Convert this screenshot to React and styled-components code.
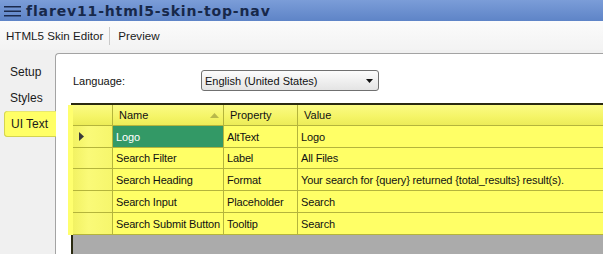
import styled, { createGlobalStyle } from 'styled-components'

const GlobalStyle = createGlobalStyle`
  html, body {
    margin: 0;
    padding: 0;
    background: #f0f0f0;
  }
  * {
    box-sizing: border-box;
  }
`

const rows = [
  { name: 'Logo', property: 'AltText', value: 'Logo', current: true },
  { name: 'Search Filter', property: 'Label', value: 'All Files' },
  { name: 'Search Heading', property: 'Format', value: 'Your search for {query} returned {total_results} result(s).' },
  { name: 'Search Input', property: 'Placeholder', value: 'Search' },
  { name: 'Search Submit Button', property: 'Tooltip', value: 'Search' },
]

const tabs = ['Setup', 'Styles', 'UI Text']

const App = () => {
  return (
    <Window>
      <GlobalStyle />

      {/* title bar */}
      <TitleBar>
        <svg width="17" height="12" viewBox="0 0 17 12">
          <rect x="0" y="1" width="17" height="1.5" fill="#1b2a4c" />
          <rect x="0" y="5.5" width="17" height="1.5" fill="#1b2a4c" />
          <rect x="0" y="10" width="17" height="1.5" fill="#1b2a4c" />
        </svg>
        <Title>flarev11-html5-skin-top-nav</Title>
      </TitleBar>

      {/* menu */}
      <MenuBar>
        <MenuItem>HTML5 Skin Editor</MenuItem>
        <MenuSep />
        <MenuItem>Preview</MenuItem>
      </MenuBar>

      <Body>
        <Sidebar>
          {tabs.map((t) => (
            <Tab key={t} $active={t === 'UI Text'}>{t}</Tab>
          ))}
        </Sidebar>

        <Panel>
          <LangRow>
            <LangLabel>Language:</LangLabel>
            <Select>
              <span>English (United States)</span>
              <svg width="7" height="4" viewBox="0 0 7 4">
                <polygon points="0,0 7,0 3.5,4" fill="#111" />
              </svg>
            </Select>
          </LangRow>

          <Grid>
            <RowsBlock>
              <HeaderRow>
                <RowHead $header />
                <HeadCell $w={111}>
                  Name
                  <svg width="9" height="5" viewBox="0 0 9 5">
                    <polygon points="0,5 9,5 4.5,0" fill="#b8b84a" />
                  </svg>
                </HeadCell>
                <HeadCell $w={74}>Property</HeadCell>
                <HeadCell>Value</HeadCell>
              </HeaderRow>
              {rows.map((r) => (
                <Row key={r.name}>
                  <RowHead>
                    {r.current ? (
                      <svg width="5" height="9" viewBox="0 0 5 9">
                        <polygon points="0,0 5,4.5 0,9" fill="#3a3a3a" />
                      </svg>
                    ) : null}
                  </RowHead>
                  <Cell $w={111} $selected={r.current}>{r.name}</Cell>
                  <Cell $w={74}>{r.property}</Cell>
                  <Cell>{r.value}</Cell>
                </Row>
              ))}
            </RowsBlock>
            <Empty />
          </Grid>
        </Panel>
      </Body>
    </Window>
  )
}

const Window = styled.div`
  width: 603px;
  height: 254px;
  display: flex;
  flex-direction: column;
  overflow: hidden;
  background: #f0f0f0;
  font-family: "Liberation Sans", Arial, sans-serif;
  color: #111;
`

const TitleBar = styled.div`
  height: 21px;
  display: flex;
  align-items: center;
  gap: 5px;
  padding-left: 4px;
  background: linear-gradient(#7b9dd8, #5e84c7);
  svg {
    flex: none;
  }
`

const Title = styled.span`
  font-family: "DejaVu Sans", sans-serif;
  font-weight: bold;
  font-size: 14px;
  letter-spacing: 0.85px;
  color: #17284a;
`

const MenuBar = styled.div`
  height: 29px;
  display: flex;
  align-items: center;
  padding-left: 6px;
  background: linear-gradient(#fbfbfb, #f3f3f3);
`

const MenuItem = styled.span`
  font-size: 11.6px;
  color: #1a1a1a;
`

const MenuSep = styled.div`
  width: 1px;
  height: 18px;
  background: #c9c9c9;
  margin: 0 8px 0 6px;
`

const Body = styled.div`
  flex: 1;
  display: flex;
  padding-top: 3px;
`

const Sidebar = styled.div`
  width: 55px;
  flex: none;
  display: flex;
  flex-direction: column;
  padding-top: 6px;
  position: relative;
  z-index: 1;
`

const Tab = styled.div`
  height: 26px;
  display: flex;
  align-items: center;
  font-size: 12px;
  color: #1a1a1a;
  margin-left: ${({ $active }) => ($active ? '4px' : '0')};
  margin-right: ${({ $active }) => ($active ? '-1px' : '0')};
  padding-left: ${({ $active }) => ($active ? '7px' : '10px')};
  background: ${({ $active }) => ($active ? '#ffff66' : 'transparent')};
  border-radius: 4px 0 0 4px;
  ${({ $active }) => ($active ? 'box-shadow: inset 1px 0 0 #d4d450, inset 0 -1px 0 #d4d450, inset 0 1px 0 #e8e870;' : '')}
`

const Panel = styled.div`
  flex: 1;
  display: flex;
  flex-direction: column;
  background: #fff;
  border-left: 1px solid #a3a3a3;
  border-top: 1px solid #a3a3a3;
  border-top-left-radius: 4px;
  padding: 16px 0 0 17px;
  min-width: 0;
`

const LangRow = styled.div`
  display: flex;
  align-items: center;
  height: 21px;
`

const LangLabel = styled.span`
  width: 128px;
  font-size: 11px;
`

const Select = styled.div`
  width: 178px;
  height: 21px;
  display: flex;
  align-items: center;
  justify-content: space-between;
  padding: 0 5px 0 3px;
  font-size: 11px;
  border: 1px solid #707070;
  border-radius: 3px;
  background: linear-gradient(#fcfcfc, #e4e4e4);
`

const Grid = styled.div`
  flex: 1;
  margin-top: 12px;
  margin-left: -2px;
  display: flex;
  flex-direction: column;
  border-left: 2px solid #2a2a10;
  border-top: 2px solid #2a2a10;
  min-width: 0;
`

const RowsBlock = styled.div`
  display: flex;
  flex-direction: column;
  box-shadow: -5px 0 0 #ffff6e;
`

const HeaderRow = styled.div`
  height: 21px;
  display: flex;
  background: linear-gradient(#fbfb84, #f4f466 60%, #ecec58);
  border-bottom: 1px solid #b4b43c;
`

const Row = styled.div`
  height: 22px;
  display: flex;
  background: #ffff66;
  border-bottom: 1px solid #b4b43c;
  &:nth-child(3) {
    height: 21px;
  }
`

const RowHead = styled.div`
  width: 40px;
  flex: none;
  display: flex;
  align-items: center;
  padding-left: 6px;
  border-right: 1px solid #b4b43c;
  background: ${({ $header }) =>
    $header ? 'transparent' : 'linear-gradient(90deg, #f2f263, #fafa78 40%, #f6f66c)'};
`

const HeadCell = styled.div`
  ${({ $w }) => ($w ? `width: ${$w}px; flex: none;` : 'flex: 1;')}
  display: flex;
  align-items: center;
  justify-content: space-between;
  padding: 0 4px 0 6px;
  font-size: 11px;
  white-space: nowrap;
  border-right: ${({ $w }) => ($w ? '1px solid #b4b43c' : 'none')};
`

const Cell = styled.div`
  ${({ $w }) => ($w ? `width: ${$w}px; flex: none;` : 'flex: 1;')}
  display: flex;
  align-items: center;
  padding-left: 3px;
  font-size: 11px;
  letter-spacing: -0.15px;
  white-space: nowrap;
  overflow: hidden;
  color: ${({ $selected }) => ($selected ? '#fff' : '#111')};
  background: ${({ $selected }) => ($selected ? '#339966' : 'transparent')};
  border-right: ${({ $w }) => ($w ? '1px solid #b4b43c' : 'none')};
`

const Empty = styled.div`
  flex: 1;
  background: #ababab;
`

export default App
